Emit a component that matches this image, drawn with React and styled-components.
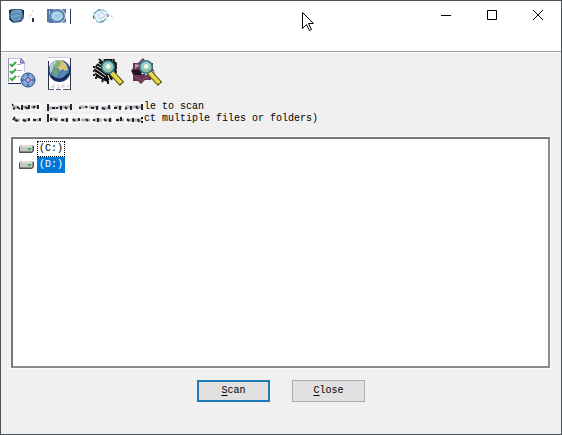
import React, { useState } from 'react'
import styled, { createGlobalStyle } from 'styled-components'

const GlobalStyle = createGlobalStyle`
    * { box-sizing: border-box; }
    body {
        margin: 0;
        background: #f0f0f0;
        font-family: "Liberation Mono", monospace;
        font-size: 10px;
        line-height: 12px;
        color: #000;
    }
`

const drives = ['(C:)', '(D:)']

const TitleIcons = () => (
    <svg width="120" height="24" viewBox="0 0 120 24" aria-hidden="true">
        <path d="M9 10l2-2h11l2 2v7l-3 4-8 1-4-4z" fill="#42678a"/>
        <path d="M11 11l4-2h6l1 5-2 5-7 1-2-3z" fill="#6c9dc3"/>
        <path d="M9 9h2v3H9zM10 17l3 3-1 1-3-3zM22 9h2v5h-1z" fill="#172e4b"/>
        <path d="M12 14q4-3 8-1M13 17q3 2 6-1" stroke="#4c7ca8" fill="none"/>
        <path d="M33 9l-1 2M30 15l2-2" stroke="#e6c6d4"/>
        <path d="M32 17h2v4h-2z" fill="#252d52"/>
        <path d="M29 13l1 5" stroke="#dce5ef"/>
        <path d="M48 8h18v14H48z" fill="#d1e6f5"/>
        <path d="M47 8h2v13h-2zM49 8h5l-4 4zM62 8h4v5zM49 17l6 5h-6zM66 17v4l-4 1z" fill="#5275a4"/>
        <path d="M70 8h1v15h-1z" fill="#23355e"/>
        <ellipse cx="57" cy="15" rx="7" ry="6" fill="#9ec9e6" stroke="#557eb0" strokeWidth="2"/>
        <path d="M53 17q0-5 4-5t5 4q-4 4-8 1" stroke="#c3e0f3" fill="none" strokeWidth="1"/>
        <path d="M94 17l1-5 4-3M102 9l4 2M96 20l5 1 5-3" fill="none" stroke="#73a5c3" strokeWidth="2"/>
        <path d="M94 14l5-5 7 1 2 5-5 5-6 1z" fill="#e5f6fc" stroke="#abd1e3"/>
        <path d="M98 14l4-3 3 4-5 3zM105 13l3 3M110 14l3 3" fill="none" stroke="#c3c7e3"/>
        <path d="M93 15l1 3M98 9h3M101 21l3-1M108 13v3" stroke="#416e92"/>
    </svg>
)

const ChecklistIcon = () => (
    <svg width="36" height="36" viewBox="0 0 36 36" aria-hidden="true">
        <path d="M4 3h13l4 5v20H4z" fill="#fff"/>
        <path d="M4.500 3v24" stroke="#9292ba"/>
        <path d="M5 3.500h11M20.500 8v9" stroke="#c5c7e2"/>
        <path d="M4 28.500h13" stroke="#30285c"/>
        <path d="M17 3.500l3.500 4.500h-4z" fill="#cfd5ff" stroke="#4e4c9d"/>
        <path d="M6 9l2 2 4-4M6 16l2 2 4-4M6 23l2 2 4-4" fill="none" stroke="#3cad47" strokeWidth="2"/>
        <path d="M13 9.500h4M13 15.500h5M13 21.500h3" stroke="#a5a5b4"/>
        <circle cx="24" cy="25" r="7" fill="#83b3df" stroke="#28427c"/>
        <circle cx="24" cy="25" r="5" fill="#9dccef" stroke="#6487c3"/>
        <path d="M24 18v3M24 29v3M17 25h3M28 25h3" stroke="#354e94"/>
        <path d="M24 21.500l3.500 3.500-3.500 3.500-3.500-3.500z" fill="#8d96dc" stroke="#353778"/>
        <path d="M23 24h2v2h-2z" fill="#e4a6b5"/>
    </svg>
)

const GlobeIcon = () => (
    <svg width="36" height="36" viewBox="0 0 36 36" aria-hidden="true">
        <path d="M6 2h23v33H6z" fill="#fff"/>
        <path d="M6 2.500h22" stroke="#c9cbd6"/>
        <path d="M6.500 6v29M28.500 3v32" stroke="#303148"/>
        <path d="M9 32l3-3v4zM15 30h2v3h-2M20 33v-3h2v3M26 29v4" fill="none" stroke="#c7c9d6"/>
        <path d="M6 34.500h6M14 34.500h5M21 34.500h7" stroke="#565772"/>
        <circle cx="17.500" cy="16" r="11" fill="#1c326d"/>
        <circle cx="17" cy="15" r="10" fill="#4a7fbd"/>
        <path d="M8 11q3-6 9-6l-2 4-4 2 1 4-4 3z" fill="#a9d4dc"/>
        <path d="M15 6l4-1 5 4 2 6-3 1-2-2-3 2-2-3-3-1z" fill="#d6c878"/>
        <path d="M15 6l4 1-1 4-4 2-3-1z" fill="#8fae6b"/>
        <path d="M10 14l4-1 3 3-1 5-3 1-3-4z" fill="#6d9f80"/>
        <path d="M20 18l5-1-2 5-4 1z" fill="#5b8ca3"/>
        <path d="M9 21q9 8 17-2" fill="none" stroke="#152457" strokeWidth="2"/>
    </svg>
)

const Magnifier = () => (
    <g>
        <path d="M21 17l11 12" stroke="#5b5717" strokeWidth="6"/>
        <path d="M21 17l10 11" stroke="#ded43c" strokeWidth="4"/>
        <path d="M22 17l10 11" stroke="#f5ee7c"/>
        <circle cx="18" cy="12" r="6" fill="#91cfc3" stroke="#35787c" strokeWidth="2"/>
        <circle cx="18" cy="12" r="5" fill="none" stroke="#8ecdd0"/>
        <path d="M16 13q-1-4 3-4l2 2-2 3z" fill="#f3f9dd"/>
        <path d="M15 15q3 2 6-1" fill="none" stroke="#b2b16a"/>
    </g>
)

const ScanFilesIcon = () => (
    <svg width="36" height="36" viewBox="0 0 36 36" aria-hidden="true">
        <path d="M4 15l2-5 4-4 5-2h7l5 4-1 12-4 3-5 4-6-3-5-2z" fill="#10110f"/>
        <path d="M5 13l11 8M5 17l9 6M8 8l3 2M7 11l4 2M12 5l3 2M22 6l3-1" stroke="#e7e9e6"/>
        <path d="M3 12h2M3 16h1M3 20h2M5 23h2M9 4l2 2M24 4l-1 3M27 9h-3M27 13l-3-1M27 17h-3" stroke="#222" strokeWidth="2"/>
        <path d="M18 22v7M22 22l-1 4M13 24l-1 4" stroke="#111" strokeWidth="2" strokeDasharray="3 1"/>
        <path d="M18 20l2 5M21 19l1 3" stroke="#fff"/>
        <Magnifier/>
    </svg>
)

const ScanVirusIcon = () => (
    <svg width="36" height="36" viewBox="0 0 36 36" aria-hidden="true">
        <path d="M5 8h5l5-5 4 5h6v6l2 4-4 2v5h-6l-4 4-3-3H5v-6l-2-4 2-3z" fill="#63304f"/>
        <path d="M7 9l5 1-5 4zM12 8l3-3 2 3z" fill="#c497b1"/>
        <path d="M4 15h20l-2 5H6z" fill="#1e1422"/>
        <path d="M14 19l2-2 2 2 2-2 2 2 2-2 2 1" fill="none" stroke="#fff" strokeWidth="2"/>
        <path d="M6 21l4 2 4 3 3-4 4 2" fill="none" stroke="#7f4263" strokeWidth="2"/>
        <Magnifier/>
    </svg>
)

const DriveIcon = () => (
    <svg width="17" height="10" viewBox="0 0 17 10" aria-hidden="true">
        <path d="M1 3l2-2h12l1 1v5l-2 2H2L1 8z" fill="#888a85"/>
        <path d="M2 3l2-2h11l-1 2z" fill="#dcddda"/>
        <path d="M1 3h13v4H1z" fill="#c3c5c0"/>
        <path d="M1.500 3v5.500H14l1.500-2V2" fill="none" stroke="#53554f"/>
        <path d="M2 7.500h12" stroke="#83867f"/>
        <path d="M10 4h3v2h-3z" fill="#53a960"/>
    </svg>
)

// worn lettering in front of the two hint lines
const WornTop = () => (
    <svg width="132" height="12" viewBox="0 0 132 12" aria-hidden="true">
        <path d="M0 2h30v8H0zM36 2h24v8H36zM66 2h66v8H66z" fill="#f8f8f9"/>
        <path d="M1 6h6M9 6h8M19 6h6M37 7h7M46 6h12M67 6h7M77 6h10M89 7h10M102 6h8M113 6h17" stroke="#b0b0b8" strokeWidth="3"/>
        <path d="M0 3l1 2M1 7l2 1M5 6l3 2M10 4v5M13 6l3 2M17 4v4M21 7l2-2M26 4v4M36 3v7M40 7h3M45 6v2M49 5v4M53 6l2 2M59 3v6M67 7h2M74 5l1 2M79 7h3M85 5v4M90 7l3 1M97 4v4M102 7h3M108 5v4M113 7l2 1M119 5v4M124 5l2 3M130 3v6" stroke="#26262c" strokeWidth="2"/>
    </svg>
)

const WornBottom = () => (
    <svg width="132" height="12" viewBox="0 0 132 12" aria-hidden="true">
        <path d="M0 1h30v9H0zM36 1h96v9H36z" fill="#f8f8f9"/>
        <path d="M2 7h6M10 7h8M21 7h8M38 6h8M49 7h7M60 7h6M69 7h9M82 7h8M93 7h7M104 7h8M115 7h15" stroke="#b3b3bb" strokeWidth="3"/>
        <path d="M1 7l2-3M3 7l3 1M11 7l3 1M17 5v3M21 7h3M28 5v3M36 1v8M39 5v3M43 6l2 2M49 7h3M55 5v4M61 6l2 2M67 5v3M74 6l2 2M81 7h2M86 5v4M92 6l2 2M98 5v4M104 7h3M109 4v4M115 6l2 2M121 5v4M126 6l1 3M130 4v2M130 8v2" stroke="#242429" strokeWidth="2"/>
    </svg>
)

const App = () => {
    const [selected, setSelected] = useState(1)

    return (
        <>
            <GlobalStyle/>
            <Window>
                <TitleBar>
                    <TitleIcons/>
                    <Captions>
                        <CaptionButton aria-label="Minimize">
                            <svg width="12" height="12" viewBox="0 0 12 12"><path d="M1 6.500h10"/></svg>
                        </CaptionButton>
                        <CaptionButton aria-label="Maximize">
                            <svg width="12" height="12" viewBox="0 0 12 12"><path d="M1.500 1.500h9v9h-9z"/></svg>
                        </CaptionButton>
                        <CaptionButton aria-label="Close window">
                            <svg width="12" height="12" viewBox="0 0 12 12"><path d="M1 1l10 10M11 1L1 11"/></svg>
                        </CaptionButton>
                    </Captions>
                </TitleBar>
                <Toolbar>
                    <ToolGroup>
                        <ToolButton aria-label="Options"><ChecklistIcon/></ToolButton>
                        <ToolButton aria-label="Update"><GlobeIcon/></ToolButton>
                    </ToolGroup>
                    <ToolGroup>
                        <ToolButton aria-label="Scan files"><ScanFilesIcon/></ToolButton>
                        <ToolButton aria-label="Scan for viruses"><ScanVirusIcon/></ToolButton>
                    </ToolGroup>
                </Toolbar>
                <Content>
                    <Hint><WornTop/>le to scan</Hint>
                    <Hint><WornBottom/>ct multiple files or folders)</Hint>
                    <DriveList role="listbox" aria-label="Drives">
                        {
                            drives.map((v, i) => (
                                <Drive
                                    key={v}
                                    role="option"
                                    aria-selected={selected === i}
                                    onClick={() => setSelected(i)}
                                >
                                    <DriveIcon/>
                                    <DriveName $selected={selected === i}>{v}</DriveName>
                                </Drive>
                            ))
                        }
                    </DriveList>
                </Content>
                <Footer>
                    <Button $primary><u>S</u>can</Button>
                    <Button><u>C</u>lose</Button>
                </Footer>
                <Pointer width="13" height="22" viewBox="0 0 13 22" aria-hidden="true">
                    <path d="M2.500 2.500v16l4-4 3 6 2-1-3-6h5z"/>
                </Pointer>
            </Window>
        </>
    )
}

export default App


const Window = styled.main`
    position: relative;
    display: flex;
    flex-direction: column;
    min-height: 100vh;
    border: 1px solid #4d5256;
    background: #f0f0f0;
`
const TitleBar = styled.header`
    display: flex;
    justify-content: space-between;
    align-items: flex-start;
    height: 51px;
    background: #fff;
    border-bottom: 1px solid #a0a0a0;
    > svg { margin-left: -1px; }
`
const Captions = styled.div`
    display: flex;
`
const CaptionButton = styled.button`
    display: flex;
    align-items: center;
    justify-content: center;
    width: 46px;
    height: 28px;
    padding: 0;
    border: 0;
    background: transparent;
    svg {
        fill: none;
        stroke: #000;
    }
    &:hover { background: #e5e5e5; }
`
const Toolbar = styled.div`
    display: flex;
    gap: 12px;
    padding: 2px 3px;
    border-top: 1px solid #fff;
`
const ToolGroup = styled.div`
    display: flex;
    gap: 2px;
`
const ToolButton = styled.button`
    display: flex;
    padding: 0;
    border: 0;
    background: transparent;
`
const Content = styled.section`
    display: flex;
    flex-direction: column;
    flex: 1;
    padding: 8px 11px 0 10px;
`
const Hint = styled.p`
    display: flex;
    margin: 0 1px;
    height: 12px;
    white-space: pre;
`
const DriveList = styled.ul`
    flex: 1;
    margin: 12px 0 0;
    padding: 2px 5px;
    list-style: none;
    background: #fff;
    border: 2px solid;
    border-color: #777 #8c8c8c #8c8c8c #777;
    box-shadow: 0 0 0 1px #fafafa;
`
const Drive = styled.li`
    display: flex;
    align-items: center;
    gap: 2px;
    height: 16px;
`
const DriveName = styled.span`
    height: 16px;
    padding: 1px;
    border: 1px dotted ${props => props.$selected ? '#0078d7' : '#000'};
    background: ${props => props.$selected ? '#0078d7' : '#fff'};
    color: ${props => props.$selected ? '#fff' : '#000'};
`
const Footer = styled.footer`
    display: flex;
    justify-content: center;
    gap: 22px;
    padding: 12px 0 32px;
`
const Button = styled.button`
    width: 73px;
    height: 22px;
    padding: 0;
    border: ${props => props.$primary ? '2px solid #1f7ab8' : '1px solid #adadad'};
    background: #e1e1e1;
    font: inherit;
    color: #000;
    u { text-underline-offset: 2px; }
`
/* mouse pointer, drawn over the title bar */
const Pointer = styled.svg`
    position: absolute;
    left: 299px;
    top: 9px;
    overflow: visible;
    fill: #fff;
    stroke: #000;
    pointer-events: none;
`
